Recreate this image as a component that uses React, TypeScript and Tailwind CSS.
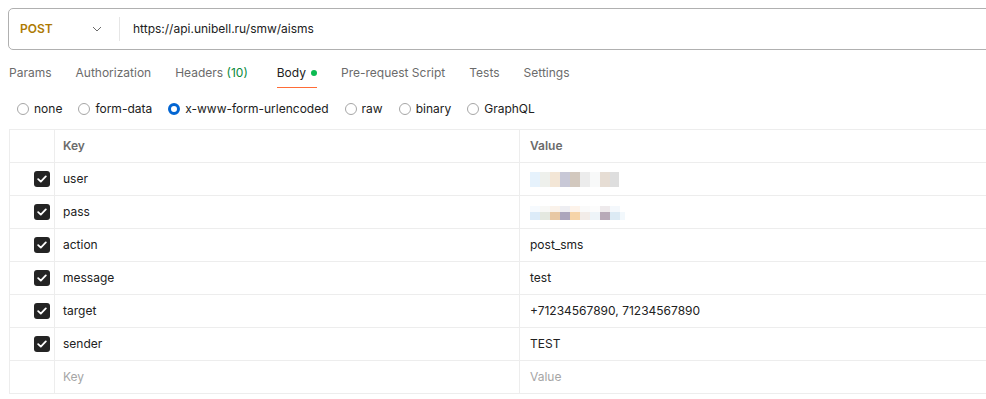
import React from "react";

const Check = () => (
  <div className="w-4 h-4 rounded-[3px] bg-[#242424] flex items-center justify-center">
    <svg width="10" height="8" viewBox="0 0 10 8" fill="none">
      <path d="M1.2 4.2 L3.8 6.6 L8.8 1.4" stroke="white" strokeWidth="1.8" strokeLinecap="round" strokeLinejoin="round" />
    </svg>
  </div>
);

const Radio = ({ on, label }: { on?: boolean; label: string }) => (
  <div className="flex items-center gap-[5px]">
    {on ? (
      <div className="w-3 h-3 rounded-full border-[3.5px] border-[#0265d2] bg-white" />
    ) : (
      <div className="w-3 h-3 rounded-full border border-[#a6a6a6] bg-white" />
    )}
    <span className="text-[#212121]">{label}</span>
  </div>
);

const UserBlur = () => (
  <div className="flex h-[15px] mt-[1px]">
    <div className="w-[10px] bg-[#e6f2fc]" />
    <div className="w-[10px] bg-[#eef0ec]" />
    <div className="w-[10px] bg-[#f3e6d6]" />
    <div className="w-[10px] bg-[#c8c8d6]" />
    <div className="w-[10px] bg-[#d2c8be]" />
    <div className="w-[10px] bg-[#ececec]" />
    <div className="w-[10px] bg-[#f8f9f9]" />
    <div className="w-[10px] bg-[#e6ddd4]" />
    <div className="w-[9px] bg-[#dedede]" />
  </div>
);

const PassBlur = () => (
  <div className="flex flex-col mt-[2px]">
    <div className="flex h-[6px]">
      <div className="w-[10px] bg-[#f6fafe]" />
      <div className="w-[10px] bg-[#f8f8f6]" />
      <div className="w-[10px] bg-[#faf2ea]" />
      <div className="w-[10px] bg-[#eeeef2]" />
      <div className="w-[10px] bg-[#fdf3ea]" />
      <div className="w-[10px] bg-[#fafafa]" />
      <div className="w-[10px] bg-[#fcfcfc]" />
      <div className="w-[10px] bg-[#eeeaec]" />
      <div className="w-[10px] bg-[#f4f8fc]" />
    </div>
    <div className="flex h-[8px]">
      <div className="w-[10px] bg-[#dcebf8]" />
      <div className="w-[10px] bg-[#e4e8e0]" />
      <div className="w-[10px] bg-[#e8c8a4]" />
      <div className="w-[10px] bg-[#aca6bc]" />
      <div className="w-[10px] bg-[#f6d4a8]" />
      <div className="w-[10px] bg-[#f2ece8]" />
      <div className="w-[10px] bg-[#eef4f8]" />
      <div className="w-[10px] bg-[#b8aab8]" />
      <div className="w-[10px] bg-[#dceaf4]" />
      <div className="w-[5px] bg-[#f2f8fc]" />
    </div>
  </div>
);

const rows: { k: string; v: React.ReactNode }[] = [
  { k: "user", v: <UserBlur /> },
  { k: "pass", v: <PassBlur /> },
  { k: "action", v: "post_sms" },
  { k: "message", v: "test" },
  { k: "target", v: "+71234567890, 71234567890" },
  { k: "sender", v: "TEST" },
];

export default function App() {
  return (
    <div
      className="w-[986px] h-[399px] overflow-hidden bg-white text-[12px] text-[#212121]"
      style={{ fontFamily: "Inter, 'Noto Sans', sans-serif" }}
    >
      {/* URL bar */}
      <div className="ml-2 mt-2 w-[1000px] h-[42px] border border-[#b0b0b0] rounded-[5px] flex items-center">
        <div className="w-[110px] flex items-center pl-[11px] pr-[17px] justify-between">
          <span className="font-semibold text-[#ad7a03]">POST</span>
          <svg width="10" height="6" viewBox="0 0 10 6" fill="none">
            <path d="M1 1 L5 5 L9 1" stroke="#6b6b6b" strokeWidth="1" />
          </svg>
        </div>
        <div className="w-px h-[24px] bg-[#e6e6e6]" />
        <span className="pl-[13px]">https://api.unibell.ru/smw/aisms</span>
      </div>

      {/* Tabs */}
      <div className="mt-[7px] ml-[9px] flex gap-6 text-[#6b6b6b]">
        <div className="pt-[6px] pb-[4px] leading-5 border-b border-transparent">Params</div>
        <div className="pt-[6px] pb-[4px] leading-5 border-b border-transparent">Authorization</div>
        <div className="pt-[6px] pb-[4px] leading-5 border-b border-transparent mr-[5px]">
          Headers <span className="text-[#0a8a3c]">(10)</span>
        </div>
        <div className="pt-[6px] pb-[4px] leading-5 border-b border-[#ff6c37] text-[#212121] flex items-center gap-[5px]">
          Body <span className="w-[6px] h-[6px] rounded-full bg-[#0cbb52] inline-block" />
        </div>
        <div className="pt-[6px] pb-[4px] leading-5 border-b border-transparent">Pre-request Script</div>
        <div className="pt-[6px] pb-[4px] leading-5 border-b border-transparent">Tests</div>
        <div className="pt-[6px] pb-[4px] leading-5 border-b border-transparent">Settings</div>
      </div>

      {/* Body types */}
      <div className="mt-[11px] ml-[17px] h-5 flex items-center gap-4">
        <Radio label="none" />
        <Radio label="form-data" />
        <Radio on label="x-www-form-urlencoded" />
        <Radio label="raw" />
        <Radio label="binary" />
        <Radio label="GraphQL" />
      </div>

      {/* Table */}
      <div className="mt-[10px] ml-[9px] w-[1000px] border-l border-t border-[#ededed]">
        <div className="flex h-[33px] border-b border-[#ededed]">
          <div className="w-[45px] border-r border-[#ededed]" />
          <div className="w-[465px] border-r border-[#ededed] pl-[8px] flex items-center font-semibold text-[#6b6b6b]">Key</div>
          <div className="flex-1 pl-[10px] flex items-center font-semibold text-[#6b6b6b]">Value</div>
        </div>
        {rows.map((r) => (
          <div key={r.k} className="flex h-[33px] border-b border-[#ededed]">
            <div className="w-[45px] border-r border-[#ededed] flex items-center justify-end pr-[4px]">
              <Check />
            </div>
            <div className="w-[465px] border-r border-[#ededed] pl-[8px] flex items-center">{r.k}</div>
            <div className="flex-1 pl-[10px] flex items-center">{r.v}</div>
          </div>
        ))}
        <div className="flex h-[33px] border-b border-[#ededed]">
          <div className="w-[45px] border-r border-[#ededed]" />
          <div className="w-[465px] border-r border-[#ededed] pl-[8px] flex items-center text-[#a6a6a6]">Key</div>
          <div className="flex-1 pl-[10px] flex items-center text-[#a6a6a6]">Value</div>
        </div>
      </div>
    </div>
  );
}
